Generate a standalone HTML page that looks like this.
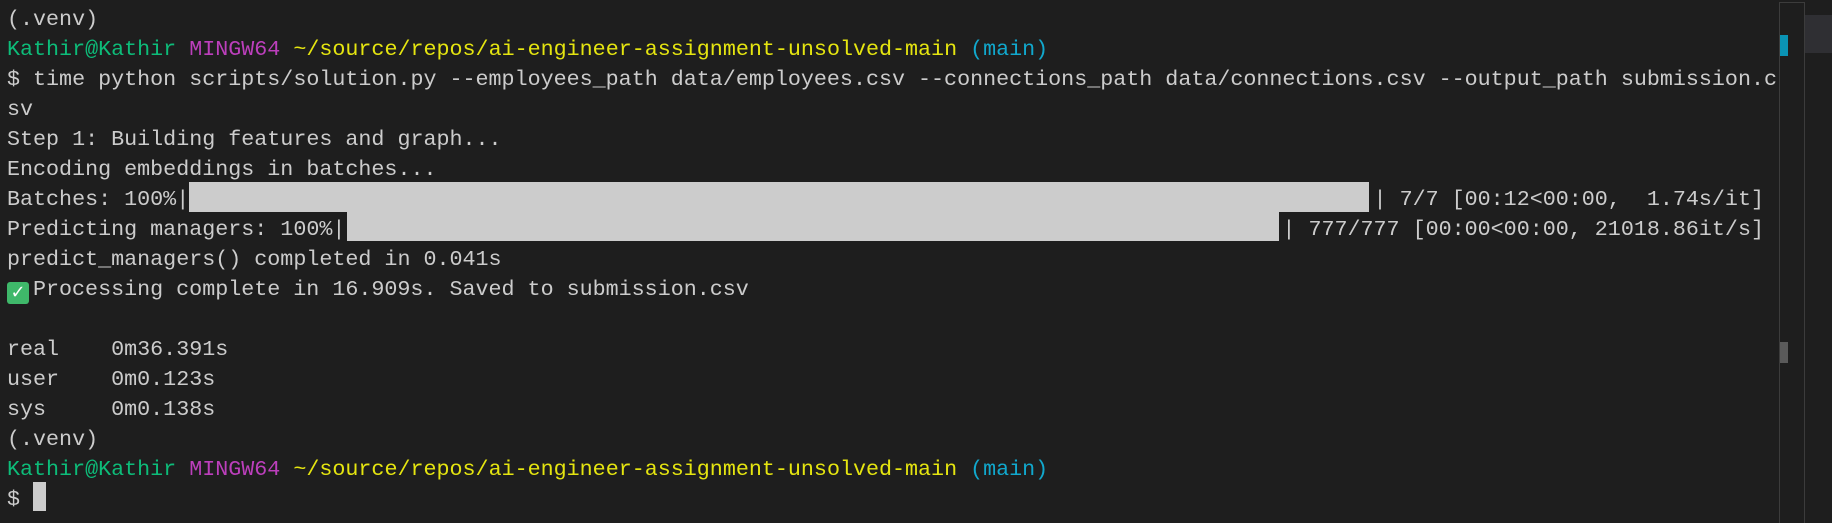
<!DOCTYPE html>
<html><head><meta charset="utf-8"><style>
html,body{margin:0;padding:0;background:#1e1e1e;width:1832px;height:523px;overflow:hidden;position:relative}
.t{position:absolute;left:7px;top:5px;font-family:"Liberation Mono",monospace;font-size:21.7px;line-height:30px;color:#cccccc;white-space:pre}
.g{color:#0dbc79}.m{color:#bc3fbc}.y{color:#e5e510}.c{color:#11a8cd}
.bar{position:absolute;background:#cccccc}
.ck{display:inline-block;width:22px;height:22px;background:#3fb86a;border-radius:3px;color:#fff;font-size:18px;line-height:22px;text-align:center;vertical-align:-3px;margin-right:4px;font-family:"DejaVu Sans",sans-serif}
</style></head><body>
<div class="t">(.venv)
<span class="g">Kathir@Kathir</span> <span class="m">MINGW64</span> <span class="y">~/source/repos/ai-engineer-assignment-unsolved-main</span> <span class="c">(main)</span>
$ time python scripts/solution.py --employees_path data/employees.csv --connections_path data/connections.csv --output_path submission.c
sv
Step 1: Building features and graph...
Encoding embeddings in batches...
Batches: 100%|                                                                                           | 7/7 [00:12&lt;00:00,  1.74s/it]
Predicting managers: 100%|                                                                        | 777/777 [00:00&lt;00:00, 21018.86it/s]
predict_managers() completed in 0.041s
<span class="ck">✓</span>Processing complete in 16.909s. Saved to submission.csv

real    0m36.391s
user    0m0.123s
sys     0m0.138s
(.venv)
<span class="g">Kathir@Kathir</span> <span class="m">MINGW64</span> <span class="y">~/source/repos/ai-engineer-assignment-unsolved-main</span> <span class="c">(main)</span>
$ </div>
<div class="bar" style="left:189px;top:182px;width:1180px;height:30px"></div>
<div class="bar" style="left:347px;top:212px;width:932px;height:29px"></div>
<div class="bar" style="left:33px;top:482px;width:13px;height:29px"></div>
<div style="position:absolute;left:1779px;top:2px;width:24px;height:521px;border-left:1px solid #3c3c3c;border-right:1px solid #3c3c3c;border-top:1px solid #3c3c3c"></div>
<div style="position:absolute;left:1780px;top:35px;width:8px;height:21px;background:#0a93b4"></div>
<div style="position:absolute;left:1780px;top:342px;width:8px;height:21px;background:#5a5a5a"></div>
<div style="position:absolute;left:1805px;top:15px;width:27px;height:38px;background:#2f2f33"></div>
</body></html>
